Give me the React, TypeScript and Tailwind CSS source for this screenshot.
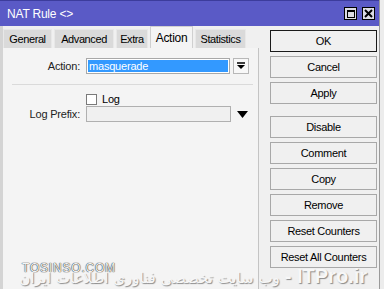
const font = { fontFamily: '"Liberation Sans", Arial, sans-serif' };

const tabs = [
  { t: "General", w: "w-[49px]" },
  { t: "Advanced", w: "w-[60px]" },
  { t: "Extra", w: "w-[32px]" },
  { t: "Action", w: "w-[43px]" },
  { t: "Statistics", w: "w-[51px]" },
];

const Btn = ({ label, primary }: { label: string; primary?: boolean }) => (
  <button
    className={`h-[22px] w-full bg-[#f0f0f0] text-[11px] tracking-[-0.3px] text-black ${
      primary ? "border border-[#1a1a1a]" : "border border-[#a8a8a8]"
    }`}
  >
    {label}
  </button>
);

const App = () => {
  return (
    <div className="w-[384px] h-[289px] bg-[#ececec] flex overflow-hidden relative" style={font}>
      <div className="w-[380px] h-full flex flex-col border-r border-[#9a9a9a]">
        {/* title bar */}
        <div className="h-[26px] bg-[#5a5ac6] border-t border-[#3c3c9c] flex items-center pl-[7px] pr-[4px]">
          <span className="text-white text-[12px] tracking-[-0.2px]">NAT Rule &lt;&gt;</span>
          <div className="ml-auto flex gap-[5px]">
            <div className="w-[13px] h-[13px] bg-[#dcdce4] border border-black flex items-center justify-center">
              <div className="w-[8px] h-[8px] border border-black border-t-2"></div>
            </div>
            <div className="w-[13px] h-[13px] bg-[#dcdce4] border border-black flex items-center justify-center">
              <svg width="9" height="9" viewBox="0 0 9 9">
                <path d="M1 1 L8 8 M8 1 L1 8" stroke="black" strokeWidth="2" />
              </svg>
            </div>
          </div>
        </div>

        <div className="flex-1 flex bg-[#f0f0f0] border-l-[3px] border-[#d4d4d4]">
          {/* left tabbed panel */}
          <div className="w-[256px] flex flex-col">
            <div className="h-[22px] flex items-end gap-[2px]">
              {tabs.map(({ t, w }) =>
                t === "Action" ? (
                  <div
                    key={t}
                    className={`${w} h-[22px] bg-[#f4f4f4] border-x border-t border-[#d0d0d0] text-[12px] tracking-[-0.3px] flex items-center justify-center`}
                  >
                    {t}
                  </div>
                ) : (
                  <div
                    key={t}
                    className={`${w} h-[19px] bg-[#dadada] border-x border-t border-[#e8e8e8] text-[11px] tracking-[-0.4px] flex items-center justify-center`}
                  >
                    {t}
                  </div>
                )
              )}
            </div>
            <div className="flex-1 bg-[#f4f4f4] border-r border-[#c4c4c4] flex flex-col pt-[10px] text-[11px] tracking-[-0.2px]">
              <div className="flex items-center h-[16px]">
                <span className="w-[77px] text-right text-[#222]">Action:</span>
                <div className="ml-[6px] w-[144px] h-[16px] border border-[#a8a8a8] bg-white p-[1px]">
                  <div className="h-full bg-[#3399ff] text-white leading-[12px] pl-[1px]">masquerade</div>
                </div>
                <div className="ml-[3px] w-[16px] h-[16px] border border-[#b8b8b8] bg-[#f8f8f8] flex items-center justify-center">
                  <svg width="8" height="8" viewBox="0 0 8 8">
                    <path d="M0 1 H8" stroke="black" strokeWidth="1.5" />
                    <path d="M0 3 H8 L4 7 Z" fill="black" />
                  </svg>
                </div>
              </div>
              <div className="h-px bg-[#dadada] ml-[9px] mr-[5px] mt-[10px]"></div>
              <div className="flex items-center mt-[9px] ml-[83px] h-[11px]">
                <div className="w-[11px] h-[11px] border border-[#7a7a7a] bg-white"></div>
                <span className="ml-[5px] text-[11px]">Log</span>
              </div>
              <div className="flex items-center h-[16px] mt-[1px]">
                <span className="w-[77px] text-right text-[#222]">Log Prefix:</span>
                <div className="ml-[6px] w-[145px] h-[16px] border border-[#b0b0b0] bg-[#f0f0f0]"></div>
                <svg className="ml-[6px]" width="11" height="7" viewBox="0 0 11 7">
                  <path d="M0 0 H11 L5.5 7 Z" fill="black" />
                </svg>
              </div>
            </div>
          </div>

          {/* right buttons */}
          <div className="ml-[11px] w-[107px] pt-[4px] flex flex-col gap-[4px]">
            <Btn label="OK" primary />
            <Btn label="Cancel" />
            <Btn label="Apply" />
            <div className="mt-[6px]">
              <Btn label="Disable" />
            </div>
            <Btn label="Comment" />
            <Btn label="Copy" />
            <Btn label="Remove" />
            <Btn label="Reset Counters" />
            <Btn label="Reset All Counters" />
          </div>
        </div>
      </div>

      {/* watermark overlays */}
      <div
        className="absolute left-[22px] top-[259px] text-[12px] tracking-[0.8px] text-[#f4f4f4]"
        style={{ textShadow: "0 0 1px #222, 0 0 1px #222" }}
      >
        TOSINSO.COM
      </div>
      <div
        dir="rtl"
        className="absolute right-[17px] top-[261px] whitespace-nowrap flex items-baseline text-[#f7f7f7]"
        style={{ fontFamily: '"DejaVu Sans", "Liberation Sans", sans-serif', textShadow: "1px 1px 1px #8a8a8a" }}
      >
        <span className="text-[20px] font-bold" style={font}>ITPro.ir -</span>
        <span className="text-[15px] mr-[5px]">وب سایت تخصصی فناوری اطلاعات ایران</span>
      </div>
    </div>
  );
};

export default App;
